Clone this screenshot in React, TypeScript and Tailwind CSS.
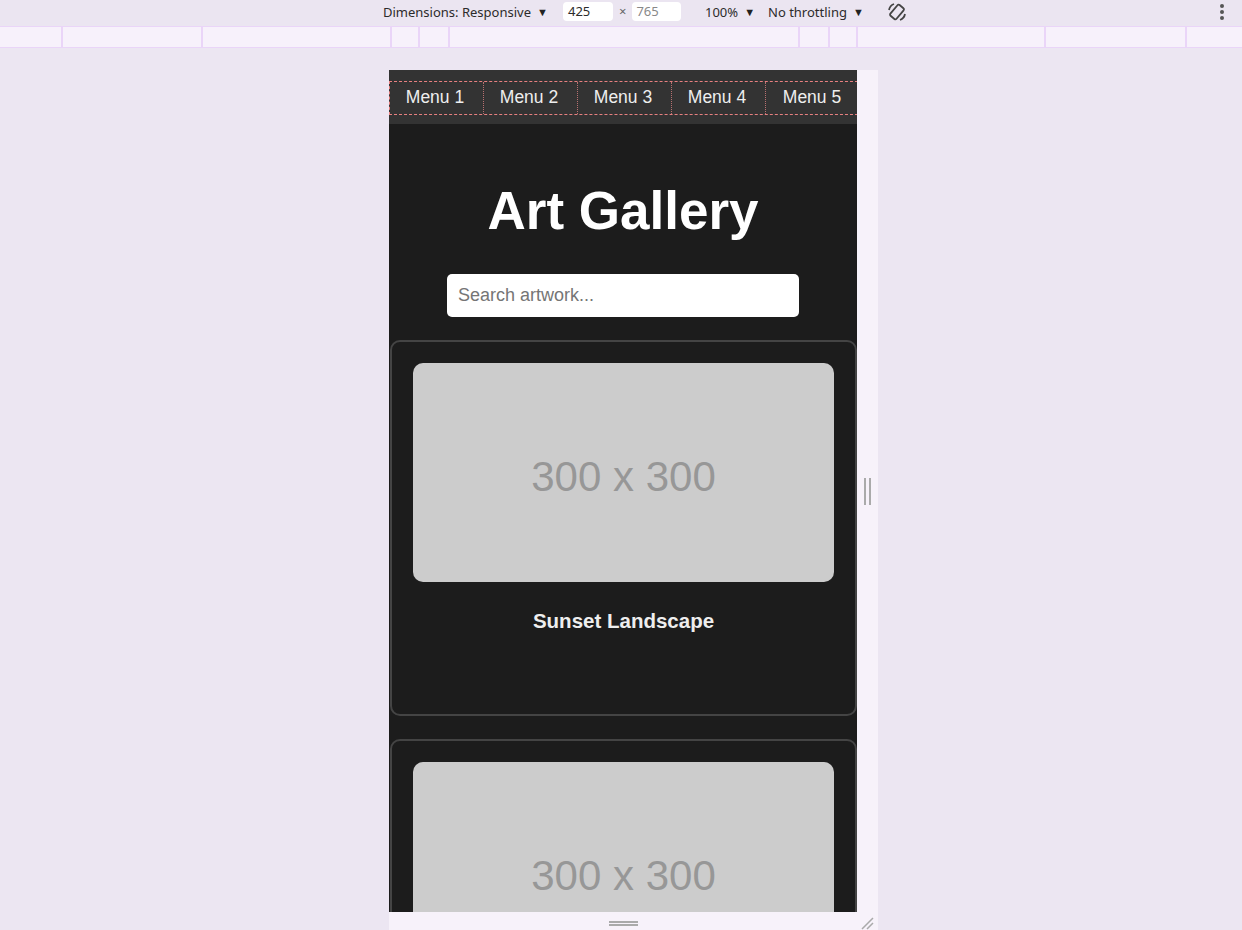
import React from "react";

const menus = ["Menu 1", "Menu 2", "Menu 3", "Menu 4", "Menu 5"];
const art = ["Sunset Landscape", "Ocean Waves"];
const leftMarks = [61, 201, 390, 418, 448];
const rightMarks = [798, 828, 856, 1044, 1185];

function Caret() {
  return <span className="ml-[6px] inline-block text-[11px] leading-none align-[1px] text-[#222]">▼</span>;
}

function Toolbar() {
  return (
    <div className="relative h-[26px] bg-[#ebe5f1] text-[13px] text-[#2b2b2b] [font-family:'Noto_Sans',sans-serif]">
      <div className="absolute left-[383px] top-[3px]">Dimensions: Responsive<Caret /></div>
      <div className="absolute left-[563px] top-[2px] flex items-center">
        <div className="h-[19px] w-[50px] rounded-[4px] bg-white pl-[5px] leading-[19px]">425</div>
        <span className="mx-[6px] text-[13px] text-[#666]">×</span>
        <div className="h-[19px] w-[49px] rounded-[4px] bg-white pl-[4px] leading-[19px] text-[#888]">765</div>
      </div>
      <div className="absolute left-[705px] top-[3px]">100%<Caret /></div>
      <div className="absolute left-[768px] top-[3px]">No throttling<Caret /></div>
      <svg className="absolute left-[886px] top-[1px]" width="22" height="22" viewBox="0 0 22 22" fill="none" stroke="#444" strokeWidth="1.8">
        <rect x="7" y="4" width="8" height="14" rx="1.5" transform="rotate(40 11 11)" />
        <path d="M3 9a8 8 0 0 1 5-6M19 13a8 8 0 0 1-5 6" />
      </svg>
      <div className="absolute left-[1220px] top-[4px] flex flex-col gap-[2px]">
        <span className="h-[4px] w-[4px] rounded-full bg-[#555]" />
        <span className="h-[4px] w-[4px] rounded-full bg-[#555]" />
        <span className="h-[4px] w-[4px] rounded-full bg-[#555]" />
      </div>
    </div>
  );
}

function MediaBar() {
  return (
    <div className="relative h-[22px] border-y border-[#ead5f8] bg-[#f7f1fb]">
      {[...leftMarks, ...rightMarks].map((x) => (
        <span key={x} className="absolute top-0 h-[20px] w-[2px] bg-[#ead5f8]" style={{ left: x }} />
      ))}
    </div>
  );
}

function Card({ title }: { title: string }) {
  return (
    <div className="rounded-[10px] border-2 border-[#444] p-[21px] pb-[82px]">
      <div className="flex h-[219px] items-center justify-center rounded-[10px] bg-[#cccccc] pt-[8px] text-[42px] text-[#979797]">
        300 x 300
      </div>
      <div className="mt-[27px] text-center text-[20.5px] font-bold leading-[23px] text-[#eeeeee]">{title}</div>
    </div>
  );
}

function Gallery() {
  return (
    <div className="h-[842px] w-[468px] overflow-hidden bg-[#1c1c1c] [font-family:'Liberation_Sans',Arial,sans-serif]">
      <div className="bg-[#333333] pb-[9px] pt-[11px]">
        <div className="flex w-max border border-dashed border-[#e88080]">
          {menus.map((m) => (
            <div key={m} className="h-[32px] w-[94px] border-r border-dotted border-[#b87070] pr-[3px] text-center text-[17.5px] leading-[30px] text-[#eeeeee] last:w-[96px]">
              {m}
            </div>
          ))}
        </div>
      </div>
      <h1 className="mt-[56px] text-center text-[53px] font-bold leading-[61px] text-white">Art Gallery</h1>
      <div className="mt-[33px] flex justify-center">
        <input
          className="h-[43px] w-[352px] rounded-[5px] bg-white px-[11px] text-[18px] text-[#222] outline-none placeholder:text-[#757575]"
          placeholder="Search artwork..."
        />
      </div>
      <div className="ml-[1px] mt-[23px] flex flex-col gap-[23px]">
        {art.map((t) => (
          <Card key={t} title={t} />
        ))}
      </div>
    </div>
  );
}

export default function App() {
  return (
    <div className="h-[930px] w-[1242px] overflow-hidden bg-[#ece6f2]">
      <Toolbar />
      <MediaBar />
      <div className="ml-[389px] mt-[22px] w-[489px]">
        <div className="flex">
          <Gallery />
          <div className="flex w-[21px] items-center justify-center gap-[3px] bg-[#f7f2fa]">
            <span className="h-[27px] w-[2px] bg-[#aaa]" />
            <span className="h-[27px] w-[2px] bg-[#aaa]" />
          </div>
        </div>
        <div className="relative h-[18px] bg-[#f7f2fa]">
          <div className="absolute left-[220px] top-[9px] flex flex-col gap-[1px]">
            <span className="h-[2px] w-[29px] bg-[#aaa]" />
            <span className="h-[2px] w-[29px] bg-[#aaa]" />
          </div>
          <svg className="absolute left-[472px] top-[5px]" width="13" height="13" viewBox="0 0 13 13" stroke="#aaa" strokeWidth="1.5">
            <path d="M1 12L12 1M6 12L12 6" />
          </svg>
        </div>
      </div>
    </div>
  );
}
